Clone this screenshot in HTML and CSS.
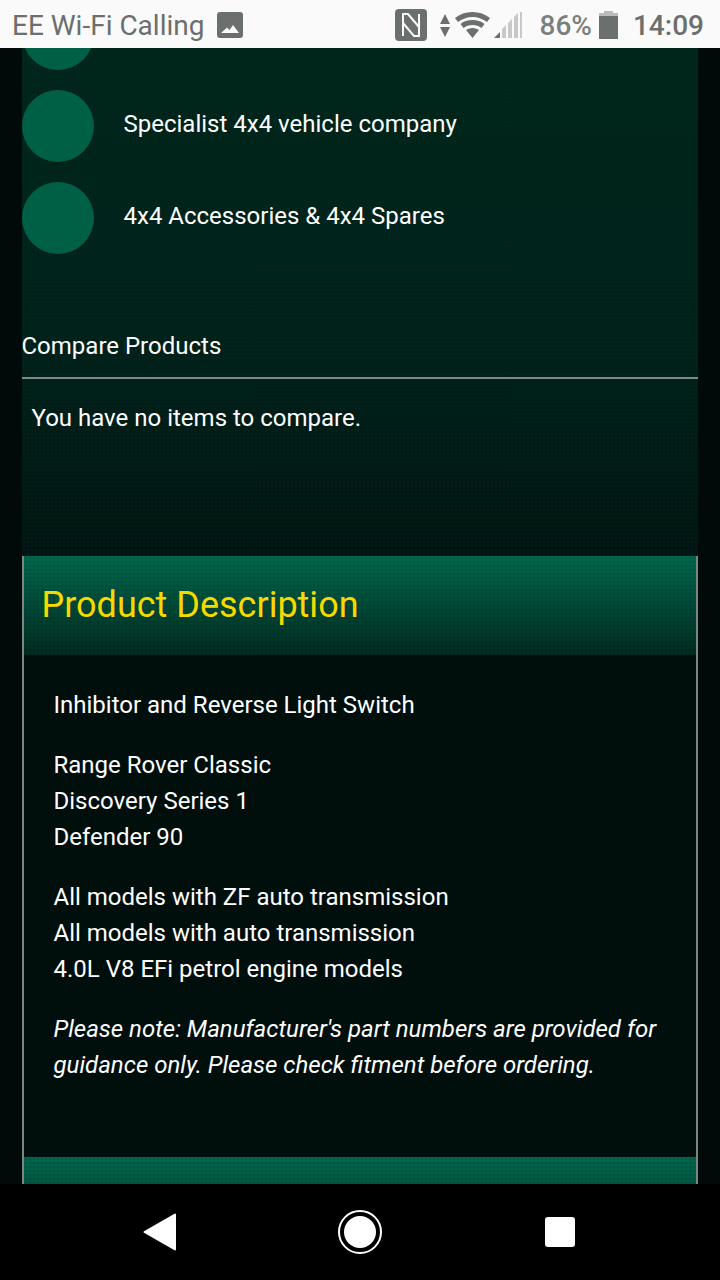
FILE: index.html
```html
<!DOCTYPE html>
<html>
<head>
  <title>Product Description</title>
  <link rel="stylesheet" href="styles.css">
</head>
<body>
  <div class="phone">
    <div class="statusbar">
      <div class="status-left">
        <span class="carrier">EE Wi-Fi Calling</span>
        <svg class="pic-icon" width="26" height="26" viewBox="0 0 26 26">
          <path fill="#6b6f6d" fill-rule="evenodd" d="M3 0h20a3 3 0 0 1 3 3v20a3 3 0 0 1-3 3H3a3 3 0 0 1-3-3V3a3 3 0 0 1 3-3zM4 21l6-5.500 2.500 2.500 3.500-5 6 8z"/>
        </svg>
      </div>
      <div class="status-right">
        <svg class="nfc-icon" width="32" height="32" viewBox="0 0 32 32">
          <rect width="32" height="32" rx="4" fill="#6b6f6d"/>
          <path fill="none" stroke="#fafafa" stroke-width="2" d="M8 27V5h5l11 13M24 5v22h-5L8 14"/>
        </svg>
        <svg class="arrows-icon" width="10" height="23" viewBox="0 0 10 23">
          <path fill="#6b6f6d" d="M5 0l5 10H0zM5 23L0 13h10z"/>
        </svg>
        <svg class="wifi-icon" width="35" height="26" viewBox="0 0 35 26">
          <path fill="#6b6f6d" d="M17.500 0C10.500 0 5 2 0 6l3 4c4-3 9-5 14.500-5S28 7 32 10l3-4c-5-4-10.500-6-17.500-6zM17.500 8C12.500 8 9 9 5.500 12l3 4c2.500-2 5.500-3 9-3s6.500 1 9 3l3-4C26 9 22.500 8 17.500 8zM17.500 16c-3 0-4.500 1-6.500 2l6.500 8 6.500-8c-2-1-3.500-2-6.500-2z"/>
        </svg>
        <svg class="signal-icon" width="28" height="26" viewBox="0 0 28 26">
          <path fill="#c6c9c7" d="M8 17l4-4v13H8zM14 11l4-4v19h-4zM20 5l4-4v25h-4zM26 0h2v26h-2z"/>
          <path fill="#6b6f6d" d="M0 26l6-6v6z"/>
        </svg>
        <span class="battery-pct">86%</span>
        <svg class="battery-icon" width="19" height="28" viewBox="0 0 19 28">
          <path fill="#b9bcba" d="M5 0h9v2h5v4H0V2h5z"/>
          <path fill="#6b6f6d" d="M0 5h19v23H0z"/>
        </svg>
        <span class="clock">14:09</span>
      </div>
    </div>

    <div class="content">
      <div class="column">
        <ul class="feature-list">
          <li class="feature"><span class="dot"></span><span class="feature-text"></span></li>
          <li class="feature"><span class="dot"></span><span class="feature-text">Specialist 4x4 vehicle company</span></li>
          <li class="feature"><span class="dot"></span><span class="feature-text">4x4 Accessories &amp; 4x4 Spares</span></li>
        </ul>

        <div class="compare">
          <div class="compare-title">Compare Products</div>
          <p class="compare-empty">You have no items to compare.</p>
        </div>

        <div class="panel">
          <h2 class="panel-head">Product Description</h2>
          <div class="panel-body">
            <p>Inhibitor and Reverse Light Switch</p>
            <p>Range Rover Classic<br>Discovery Series 1<br>Defender 90</p>
            <p>All models with ZF auto transmission<br>All models with auto transmission<br>4.0L V8 EFi petrol engine models</p>
            <p class="note">Please note: Manufacturer's part numbers are provided for guidance only. Please check fitment before ordering.</p>
          </div>
          <div class="panel-head"></div>
        </div>
      </div>
    </div>

    <div class="navbar">
      <svg width="34" height="38" viewBox="0 0 34 38">
        <path fill="#fff" stroke="#fff" stroke-width="2" stroke-linejoin="round" d="M32 1.500v35L1.500 19z"/>
      </svg>
      <svg class="nav-home" width="44" height="44" viewBox="0 0 44 44">
        <circle cx="22" cy="22" r="21" fill="none" stroke="#fff" stroke-width="2"/>
        <circle cx="22" cy="22" r="16" fill="#fff"/>
      </svg>
      <span class="nav-square"></span>
    </div>
  </div>
</body>
</html>
```

FILE: styles.css
```css
* {
  box-sizing: border-box;
}
body {
  margin: 0;
  font-family: Roboto, "Liberation Sans", sans-serif;
  background-color: #000;
}
.phone {
  display: flex;
  flex-direction: column;
  width: 720px;
  height: 1280px;
  overflow: hidden;
}
.statusbar {
  display: flex;
  flex: none;
  justify-content: space-between;
  align-items: center;
  height: 48px;
  padding: 2px 16px 0 12px;
  background-color: #fafafa;
  color: #6b6f6d;
}
.status-left,
.status-right {
  display: flex;
  align-items: center;
}
.carrier {
  font-size: 28px;
}
.pic-icon {
  margin-left: 13px;
}
.arrows-icon {
  margin-left: 13px;
}
.wifi-icon {
  margin-left: 5px;
}
.signal-icon {
  margin-left: 4px;
}
.battery-pct {
  margin-left: 18px;
  font-size: 28px;
  font-weight: 500;
  color: #7b7f7d;
}
.battery-icon {
  margin-left: 7px;
}
.clock {
  margin-left: 15px;
  font-size: 28px;
  font-weight: 500;
}
.content {
  flex: 1;
  min-height: 0;
  overflow: hidden;
  padding: 0 22px;
  background-color: #000a08;
}
.column {
  height: 100%;
  background-color: #000f0c;
  background-image:
    radial-gradient(circle, rgba(0, 60, 45, 0.12) 1px, transparent 1.5px),
    linear-gradient(#00251b 0, #00211a 300px, #001511 508px, #000f0c 508px);
  background-size: 4px 4px, 100% 100%;
  color: #fff;
  font-size: 24px;
}
.feature-list {
  display: flex;
  flex-direction: column;
  gap: 20px;
  margin: 0 0 -50px;
  padding: 0;
  list-style: none;
  transform: translateY(-50px);
}
.feature {
  display: flex;
  align-items: center;
  gap: 29.5px;
}
.feature-text {
  padding-bottom: 4px;
}
.dot {
  flex: none;
  width: 72px;
  height: 72px;
  border-radius: 50%;
  background-color: #006045;
}
.compare {
  margin-top: 74px;
}
.compare-title {
  height: 51px;
  line-height: 36px;
  text-indent: -0.5px;
  border-bottom: 2px solid #7d8a86;
}
.compare-empty {
  margin: 0;
  padding: 21px 9.5px 0;
  line-height: 36px;
}
.panel {
  margin-top: 120px;
  border-left: 2px solid #7d8481;
  border-right: 2px solid #7d8481;
  background-color: #000f0c;
}
.panel-head {
  height: 99px;
  margin: 0;
  padding: 0 17.5px;
  font-size: 36px;
  font-weight: 400;
  line-height: 98px;
  color: #f7d900;
  background-image:
    radial-gradient(circle, rgba(0, 0, 0, 0.12) 1px, transparent 1.5px),
    linear-gradient(#00674d, #002b20);
  background-size: 4px 4px, 100% 100%;
}
.panel-body {
  height: 502px;
  padding: 32px 29.5px 0;
  line-height: 36px;
}
.panel-body p {
  margin: 0 0 24px;
}
.note {
  font-style: italic;
}
.navbar {
  display: flex;
  flex: none;
  justify-content: space-between;
  align-items: center;
  height: 96px;
  padding: 0 145px 0 143px;
  background-color: #000;
}
.nav-home {
  margin-right: 2px;
}
.nav-square {
  width: 30px;
  height: 30px;
  border-radius: 3px;
  background-color: #fff;
}
```
